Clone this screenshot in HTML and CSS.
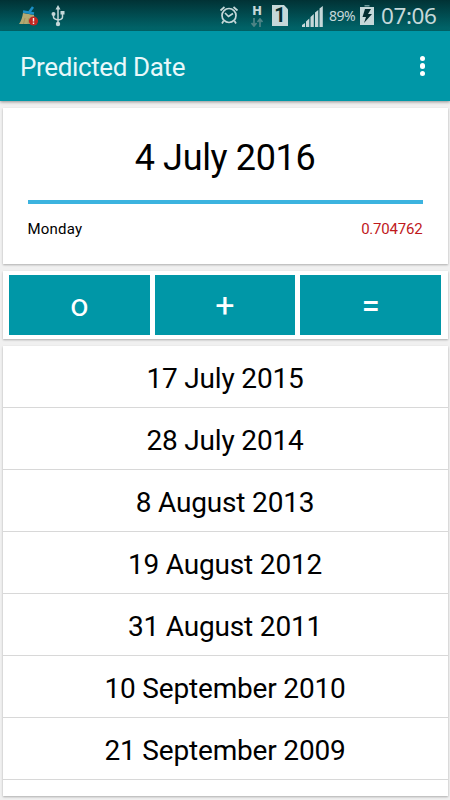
FILE: index.html
```html
<!DOCTYPE html>
<html lang="en">
<head>
    <meta charset="UTF-8">
    <meta name="viewport" content="width=device-width, initial-scale=1.0">
    <title>Predicted Date</title>
    <link rel="stylesheet" href="styles.css">
</head>
<body>
    <div class="status-bar">
        <svg class="icon-cleaner" width="22" height="20" viewBox="0 0 22 20">
            <path d="M5 7 L16 9 L17 18 L1 18 Q4 14 5 7Z" fill="#b3a972"/>
            <path d="M7 12 L5.500 18 M11 12 L10 18" stroke="#a0965f" fill="none"/>
            <path d="M5 5.500 L16 7.500 M11 6.500 L15 1" stroke="#1b8fc6" stroke-width="2.500" fill="none"/>
            <circle cx="15.500" cy="15" r="4.600" fill="#c32722"/>
            <path d="M15.500 12 V15.500 M15.500 16.500 V18" stroke="#eee" stroke-width="1.400"/>
        </svg>
        <svg class="icon-usb" width="14" height="22" viewBox="0 0 14 22" fill="none" stroke="#c5d8d9" stroke-width="1.500">
            <path d="M7 2 V19 M2.500 10 V12 Q2.500 14 7 15 Q11.500 14.500 11.500 12 V8"/>
            <path d="M4.500 4.500 L7 0 L9.500 4.500Z M9.500 6 H13.500 V9.500 H9.500Z" fill="#c5d8d9" stroke="none"/>
            <circle cx="2.500" cy="9" r="2" fill="#c5d8d9" stroke="none"/>
            <circle cx="7" cy="19" r="2.200" fill="#c5d8d9" stroke="none"/>
        </svg>
        <svg class="icon-alarm" width="20" height="20" viewBox="0 0 20 20" fill="none" stroke="#c5d8d9" stroke-width="1.700">
            <circle cx="10" cy="10.500" r="7"/>
            <path d="M1.500 5.500 L5.500 2 M14.500 2 L18.500 5.500 M4.500 16 L3 18.500 M15.500 16 L17 18.500 M6 8 L9.500 11.500 L14 8.500"/>
        </svg>
        <div class="network">
            <span class="network-type">H</span>
            <svg width="12" height="9" viewBox="0 0 12 9" fill="none" stroke="#4f8587" stroke-width="1.700">
                <path d="M3 0 V7 M0.500 5 L3 8 L5.500 5 M9 9 V2 M6.500 4 L9 1 L11.500 4"/>
            </svg>
        </div>
        <div class="sim">1</div>
        <svg class="icon-signal" width="21" height="21" viewBox="0 0 21 21" fill="#c5d8d9">
            <path d="M0 21 V19 L3 17 V21Z M4 21 V15.500 L7.300 12.500 V21Z M8.500 21 V11 L11.800 8 V21Z M13 21 V6.500 L16.300 4 V21Z M17.500 21 V2.500 L20.800 0 V21Z"/>
        </svg>
        <span class="battery-level">89%</span>
        <svg class="icon-battery" width="14" height="20" viewBox="0 0 14 20">
            <path d="M4.500 0 H9.500 V1.500 H4.500Z" fill="#729c9e"/>
            <path d="M0 2 H14 V20 H0Z" fill="#c5d8d9"/>
            <path d="M5 4 H11 L8 9 H12 L4 18 L6 12 H2.500Z" fill="#032d30"/>
        </svg>
        <span class="clock">07:06</span>
    </div>

    <header class="app-bar">
        <h1>Predicted Date</h1>
        <button class="menu" aria-label="More options">
            <span class="dot"></span>
            <span class="dot"></span>
            <span class="dot"></span>
        </button>
    </header>

    <main>
        <section class="card result">
            <div class="date">4 July 2016</div>
            <div class="line"></div>
            <div class="details">
                <span class="weekday">Monday</span>
                <span class="value">0.704762</span>
            </div>
        </section>

        <section class="card buttons">
            <button>o</button>
            <button class="plus">+</button>
            <button class="equals">=</button>
        </section>

        <ul class="card dates">
            <li>17 July 2015</li>
            <li>28 July 2014</li>
            <li>8 August 2013</li>
            <li>19 August 2012</li>
            <li>31 August 2011</li>
            <li>10 September 2010</li>
            <li>21 September 2009</li>
        </ul>
    </main>
</body>
</html>
```
FILE: styles.css
```css
* {
    box-sizing: border-box;
}

body {
    margin: 0;
    height: 800px;
    overflow: hidden;
    background-color: #f0f0f0;
    font-family: Roboto, sans-serif;
    color: #000;
}

button {
    border: none;
    padding: 0;
    font-family: inherit;
    color: white;
}

.status-bar {
    display: flex;
    height: 31px;
    padding-top: 5px;
    align-items: flex-start;
    background: linear-gradient(#013235, #00686d);
    color: #c5d8d9;
}

.icon-cleaner {
    margin: 1px 0 0 18px;
}

.icon-usb {
    margin-left: 11px;
}

.icon-alarm {
    margin-left: 154px;
}

.network {
    display: flex;
    flex-direction: column;
    align-items: center;
    width: 12px;
    margin-left: 12px;
}

.network-type {
    font-size: 13px;
    font-weight: 900;
    line-height: 12px;
    margin-bottom: 1px;
}

.sim {
    width: 16px;
    height: 21px;
    margin-left: 9px;
    background-color: #c5d8d9;
    color: #032d30;
    font-size: 20px;
    font-weight: bold;
    line-height: 21px;
    text-align: center;
    clip-path: polygon(0 0, 75% 0, 100% 20%, 100% 100%, 0 100%);
}

.icon-signal {
    margin: 1px 0 0 14px;
}

.battery-level {
    width: 27px;
    margin-left: 6px;
    font-family: "Noto Sans", sans-serif;
    font-size: 14px;
    line-height: 22px;
    letter-spacing: -0.5px;
}

.icon-battery {
    margin-left: 4px;
}

.clock {
    margin-left: 7px;
    font-family: "Noto Sans", sans-serif;
    font-size: 22.500px;
    line-height: 21px;
    letter-spacing: -0.4px;
}

.app-bar {
    display: flex;
    align-items: center;
    justify-content: space-between;
    height: 70px;
    padding: 0 25px 0 20px;
    background-color: #0097a7;
    box-shadow: 0 1px 3px rgba(0, 0, 0, 0.4);
}

h1 {
    margin: 2px 0 0;
    font-size: 26px;
    font-weight: normal;
    letter-spacing: -0.37px;
    color: #e9f8fa;
}

.menu {
    display: flex;
    flex-direction: column;
    gap: 2.3px;
    background: none;
}

.dot {
    width: 5.3px;
    height: 5.3px;
    border-radius: 50%;
    background-color: white;
}

main {
    display: flex;
    flex-direction: column;
    gap: 7px;
    padding: 7px 2.500px 0;
}

.card {
    margin: 0;
    background-color: white;
    box-shadow: 0 1px 2px rgba(0, 0, 0, 0.28);
}

.result {
    height: 156px;
    padding: 28px 25px 0;
}

.date {
    font-size: 36px;
    line-height: 45px;
    letter-spacing: -0.35px;
    text-align: center;
}

.line {
    height: 4px;
    margin-top: 18.500px;
    background-color: #3cb3df;
}

.details {
    display: flex;
    justify-content: space-between;
    margin-top: 15.500px;
    font-size: 15px;
    line-height: 20px;
}

.weekday {
    letter-spacing: 0.2px;
}

.value {
    letter-spacing: -0.2px;
    color: #c0191c;
}

.buttons {
    display: grid;
    grid-template-columns: repeat(3, 1fr);
    gap: 5px;
    height: 68px;
    padding: 4px 6.500px;
}

.buttons button {
    background-color: #0097a7;
    font-size: 32px;
}

.buttons .plus {
    font-size: 34px;
}

.buttons .equals {
    padding-bottom: 1px;
    font-weight: 500;
}

.dates {
    height: 450px;
    padding: 0;
    list-style: none;
}

.dates li {
    height: 62px;
    padding-top: 2px;
    border-bottom: 1px solid #d8d8d8;
    font-size: 28px;
    line-height: 62px;
    letter-spacing: -0.17px;
    text-align: center;
}
```
